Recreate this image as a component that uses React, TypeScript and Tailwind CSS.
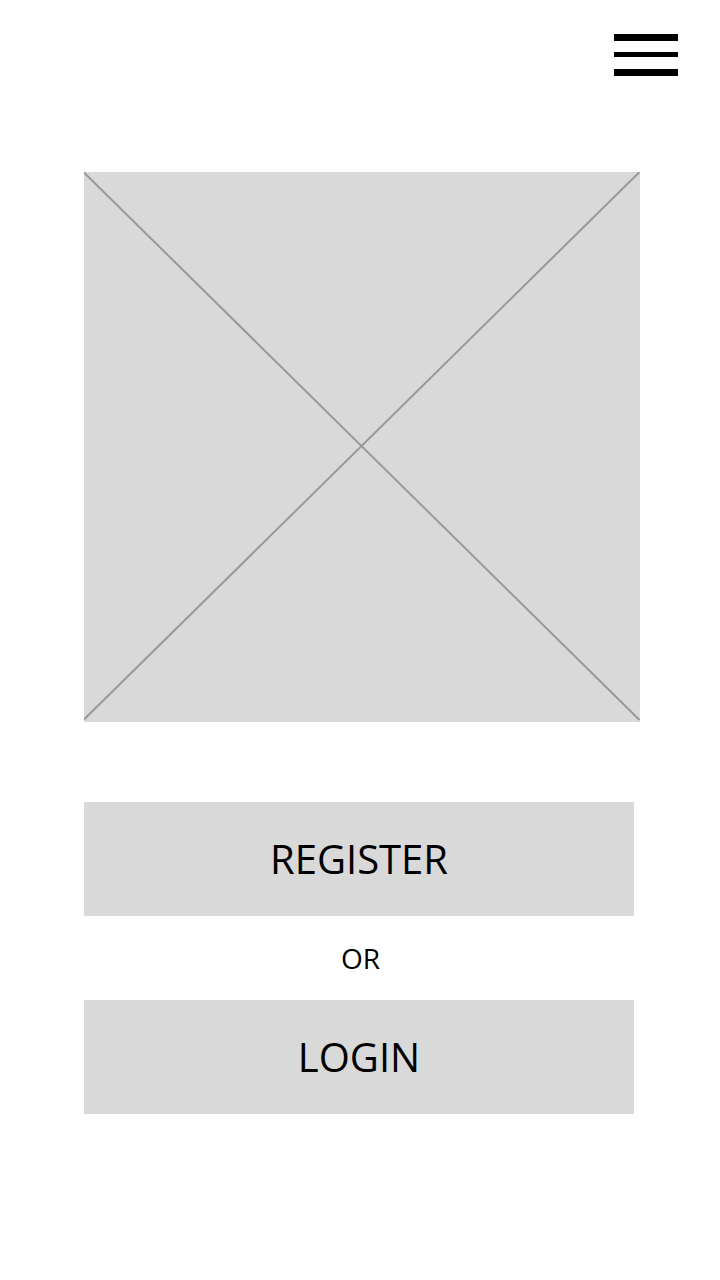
export default function App() {
  return (
    <div className="w-[720px] h-[1280px] bg-white relative" style={{ fontFamily: '"Open Sans", "Noto Sans", sans-serif' }}>
      <div className="flex justify-end pt-[34px] pr-[42px]">
        <div className="flex flex-col w-[64px]">
          <div className="h-[7px] bg-black" />
          <div className="h-[5px] bg-black mt-[11px]" />
          <div className="h-[7px] bg-black mt-[12px]" />
        </div>
      </div>
      <div className="pl-[84px] mt-[96px]">
        <div className="w-[556px] h-[550px] bg-[#d9d9d9] relative">
          <svg className="absolute inset-0" width="556" height="550" viewBox="0 0 556 550">
            <line x1="-0.5" y1="0" x2="555.5" y2="548" stroke="#999999" strokeWidth="2" />
            <line x1="555.5" y1="0" x2="-0.5" y2="548" stroke="#999999" strokeWidth="2" />
          </svg>
        </div>
      </div>
      <div className="pl-[84px] mt-[80px] flex flex-col w-[634px]">
        <div className="h-[114px] bg-[#d9d9d9] flex items-center justify-center text-[40px] text-black leading-none">
          REGISTER
        </div>
        <div className="h-[84px] flex items-center justify-center pl-[3px] text-[28px] text-black leading-none">
          OR
        </div>
        <div className="h-[114px] bg-[#d9d9d9] flex items-center justify-center text-[40px] text-black leading-none">
          LOGIN
        </div>
      </div>
    </div>
  );
}
